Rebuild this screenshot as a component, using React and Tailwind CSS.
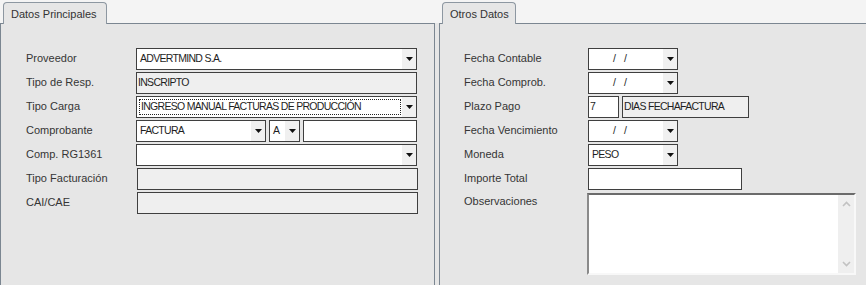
import React from 'react';

const Arrow = () => (
    <svg width="7" height="4" viewBox="0 0 7 4"><path d="M0 0h7L3.5 4z" fill="#111" /></svg>
);

function Combo({ value, w, focus, center }) {
    return (
        <div className={`${w} h-[22px] shrink-0 flex bg-white border border-[#3f3f3f]`}>
            <div className={`flex-1 min-w-0 flex items-center ${center ? 'pl-[23px]' : 'pl-[2px]'} py-[2px]`}>
                <div className={`h-full w-full flex items-center text-[10.5px] text-[#1e1e1e] tracking-[-0.7px] whitespace-pre ${focus ? 'border border-dotted border-[#222] pl-[1px]' : 'pl-[1px]'}`}>
                    {value}
                </div>
            </div>
            <div className="w-[15px] bg-[#f0f0f0] flex items-center justify-center border-l border-white">
                <Arrow />
            </div>
        </div>
    );
}

function Field({ value, w, grey, extra = '' }) {
    return (
        <div className={`${w} h-[22px] shrink-0 flex items-center pl-[1px] text-[10.5px] text-[#1e1e1e] tracking-[-0.7px] whitespace-pre border border-[#3f3f3f] ${grey ? 'bg-[#efefef]' : 'bg-white'} ${extra}`}>
            {value}
        </div>
    );
}

function Row({ label, labelW = 'w-[110px]', children }) {
    return (
        <div className="flex h-[22px]">
            <div className={`${labelW} shrink-0 pt-[3px] text-[11px] leading-[14px] text-[#353535]`}>{label}</div>
            <div className="flex gap-[3px]">{children}</div>
        </div>
    );
}

function Tab({ title, w }) {
    return (
        <div className="h-[23px] flex items-end">
            <div className={`${w} h-[22px] relative -mb-px ml-[3px] z-10 bg-[#e6e6e6] border border-b-0 border-[#8d97a1] rounded-t-[4px] pl-[7px] pt-[3px] text-[11px] text-[#333]`}>
                {title}
            </div>
        </div>
    );
}

export default function App() {
    return (
        <div className="w-[866px] h-[285px] overflow-hidden flex bg-[linear-gradient(#f4f4f4_23px,#e6e6e6_23px)] font-['Liberation_Sans',Arial,sans-serif]">
            <div className="w-[435px] shrink-0 flex flex-col">
                <Tab title="Datos Principales" w="w-[104px]" />
                <div className="flex-1 bg-[#e6e6e6] border-t border-l border-r border-[#7b8691] pl-[25px] pt-[24px] flex flex-col gap-[2px]">
                    <Row label="Proveedor"><Combo w="w-[281px]" value="ADVERTMIND S.A." /></Row>
                    <Row label="Tipo de Resp."><Field w="w-[281px]" grey value="INSCRIPTO" /></Row>
                    <Row label="Tipo Carga"><Combo w="w-[281px]" focus value="INGRESO MANUAL FACTURAS DE PRODUCCIÓN" /></Row>
                    <Row label="Comprobante">
                        <Combo w="w-[130px]" value="FACTURA" />
                        <Combo w="w-[31px]" value="A" />
                        <Field w="w-[114px]" />
                    </Row>
                    <Row label="Comp. RG1361"><Combo w="w-[281px]" value="" /></Row>
                    <Row label="Tipo Facturación"><Field w="w-[281px]" grey extra="ml-px" /></Row>
                    <Row label="CAI/CAE"><Field w="w-[281px]" grey extra="ml-px" /></Row>
                </div>
            </div>
            <div className="w-[4px] shrink-0" />
            <div className="flex-1 flex flex-col">
                <Tab title="Otros Datos" w="w-[74px]" />
                <div className="flex-1 bg-[#e6e6e6] border-t border-l border-[#7b8691] pl-[24px] pt-[24px] flex flex-col gap-[2px]">
                    <Row label="Fecha Contable" labelW="w-[124px]"><Combo w="w-[90px]" center value="/    /" /></Row>
                    <Row label="Fecha Comprob." labelW="w-[124px]"><Combo w="w-[90px]" center value="/    /" /></Row>
                    <Row label="Plazo Pago" labelW="w-[124px]">
                        <Field w="w-[31px]" value="7" />
                        <Field w="w-[127px]" grey value="DIAS FECHAFACTURA" />
                    </Row>
                    <Row label="Fecha Vencimiento" labelW="w-[124px]"><Combo w="w-[90px]" center value="/    /" /></Row>
                    <Row label="Moneda" labelW="w-[124px]"><Combo w="w-[90px]" value="PESO" /></Row>
                    <Row label="Importe Total" labelW="w-[124px]"><Field w="w-[154px]" /></Row>
                    <div className="flex pt-[1px]">
                        <div className="w-[123px] shrink-0 pt-[1px] text-[11px] leading-[14px] text-[#353535]">Observaciones</div>
                        <div className="w-[269px] h-[82px] flex bg-white border-2 border-t-[#6b6b6b] border-l-[#8a8a8a] border-r-[#f8f8f8] border-b-[#f8f8f8]">
                            <div className="flex-1" />
                            <div className="w-[16px] bg-[#efefef] flex flex-col items-center justify-between py-[6px]">
                                <svg width="9" height="6" viewBox="0 0 9 6"><path d="M1 5l3.5-3.5L8 5" stroke="#c2c2c2" strokeWidth="1.6" fill="none" /></svg>
                                <svg width="9" height="6" viewBox="0 0 9 6"><path d="M1 1l3.5 3.5L8 1" stroke="#c2c2c2" strokeWidth="1.6" fill="none" /></svg>
                            </div>
                        </div>
                    </div>
                </div>
            </div>
        </div>
    );
}
